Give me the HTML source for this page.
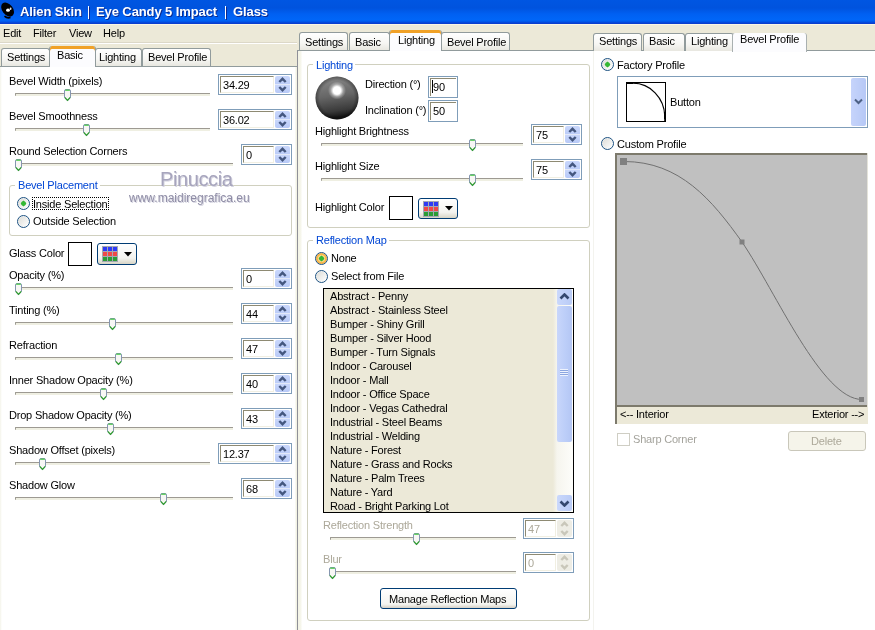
<!DOCTYPE html><html><head><meta charset="utf-8"><style>
*{margin:0;padding:0;box-sizing:border-box}
html,body{width:875px;height:630px;overflow:hidden;background:#ECE9D8}
body{position:relative;font-family:"Liberation Sans",sans-serif}
.ab{position:absolute;display:block}
.t{position:absolute;font-size:11px;line-height:13px;white-space:nowrap;letter-spacing:-0.2px;color:#000}
.tabu{position:absolute;border:1px solid #919B9C;border-bottom:none;border-radius:3px 3px 0 0;background:linear-gradient(#FFFFFF,#F6F6F3 60%,#E8E7E0)}
.tabs{position:absolute;border:1px solid #919B9C;border-top:none;border-bottom:none;border-radius:3px 3px 0 0;background:#FCFCFE;box-shadow:inset 0 3px 0 #F0A127;}
.trk{position:absolute;height:3px;border-top:1px solid #9D9A92;border-left:1px solid #9D9A92;background:#EFEFE2;border-radius:1px 0 0 1px}
.spin{position:absolute;border:1px solid #7F9DB9;background:#fff}
.spin .ed{position:absolute;left:1px;top:1px;height:17px;border-top:1px solid #8E8A73;border-left:1px solid #8E8A73;border-right:1px solid #F1EFE2;border-bottom:1px solid #F1EFE2}
.spin .sb{position:absolute;right:1px;top:1px;width:15px;height:17px;background:linear-gradient(#C9D7FB,#BCCDF8 47%,#E3E9F9 50%,#C9D7FB 53%,#B7C9F7);border-radius:2px}
.spin .sb.dis{background:#EEEDE5}
.cbtn{position:absolute;border:1px solid #003C74;border-radius:3px;background:linear-gradient(#FFFFFF,#F3F3EF 70%,#D8D5C6)}
.grp{position:absolute;border:1px solid #D0D0BF;border-radius:3px}
.glab{color:#0046D5;background:#fff}
.pbtn{position:absolute;border:1px solid #003C74;border-radius:3px;background:linear-gradient(#FFFFFF,#F4F4F0 80%,#D6D0C5)}
</style></head><body><div id="root" style="position:absolute;left:0;top:0;width:875px;height:630px;overflow:hidden;will-change:transform">
<div style="position:absolute;left:0px;top:0px;width:875px;height:24px;background:linear-gradient(#0056E2 0,#0053DE 8px,#0060F2 14px,#0066F8 20px,#0052E6 22px,#0A3ECF 23px,#0A3ECF 24px)"></div>
<svg class="ab" style="left:0;top:0" width="17" height="21" viewBox="0 0 17 21"><ellipse cx="7.6" cy="9.6" rx="5.3" ry="7.9" transform="rotate(-38 7.6 9.6)" fill="#000"/><path d="M4.5 16.2 Q7 18.6 10.5 17.6" stroke="#000" stroke-width="1.6" fill="none"/><ellipse cx="8" cy="10.2" rx="1.9" ry="1.6" fill="#fff"/><ellipse cx="10.6" cy="8.8" rx="0.9" ry="1.2" fill="#ddd"/></svg>
<div class="t" style="left:20px;top:4px;font-size:13px;line-height:15px;font-weight:bold;color:#fff;letter-spacing:-0.1px;text-shadow:1px 1px 0 #0A2A90">Alien Skin</div>
<div class="t" style="left:96px;top:4px;font-size:13px;line-height:15px;font-weight:bold;color:#fff;letter-spacing:-0.1px;text-shadow:1px 1px 0 #0A2A90">Eye Candy 5 Impact</div>
<div class="t" style="left:233px;top:4px;font-size:13px;line-height:15px;font-weight:bold;color:#fff;letter-spacing:-0.1px;text-shadow:1px 1px 0 #0A2A90">Glass</div>
<div style="position:absolute;left:88px;top:6px;width:1px;height:13px;background:#fff;box-shadow:1px 1px 0 #0A2A90"></div>
<div style="position:absolute;left:225px;top:6px;width:1px;height:13px;background:#fff;box-shadow:1px 1px 0 #0A2A90"></div>
<div style="position:absolute;left:0px;top:24px;width:875px;height:1px;background:#FBF6E4"></div>
<div class="t" style="left:3px;top:27px;">Edit</div>
<div class="t" style="left:33px;top:27px;">Filter</div>
<div class="t" style="left:69px;top:27px;">View</div>
<div class="t" style="left:103px;top:27px;">Help</div>
<div style="position:absolute;left:0px;top:42px;width:297px;height:1px;background:#DCD8C8"></div>
<div style="position:absolute;left:0px;top:43px;width:297px;height:1px;background:#FFFFFF"></div>
<div style="position:absolute;left:0px;top:66px;width:298px;height:564px;background:linear-gradient(90deg,#F4F4EA 0,#FFFFFF 2px,#FFFFFF 295px,#F2F2E4 296px);border-top:1px solid #919B9C;border-right:1px solid #8F9098"></div>
<div class="tabu" style="left:1px;top:48px;width:49px;height:18px"></div>
<div class="t" style="left:7px;top:51px;">Settings</div>
<div class="tabu" style="left:95px;top:48px;width:47px;height:18px"></div>
<div class="t" style="left:99px;top:51px;">Lighting</div>
<div class="tabu" style="left:142px;top:48px;width:69px;height:18px"></div>
<div class="t" style="left:148px;top:51px;">Bevel Profile</div>
<div class="tabs" style="left:49px;top:46px;width:47px;height:21px;"></div>
<div class="t" style="left:57px;top:49px;">Basic</div>
<div class="t" style="left:9px;top:75px;">Bevel Width (pixels)</div>
<div class="trk" style="left:15px;top:93px;width:195px"></div>
<svg class="ab" style="left:64px;top:89px" width="7" height="13" viewBox="0 0 7 13"><path d="M0.5 2 Q0.5 0.5 2 0.5 H5 Q6.5 0.5 6.5 2 V8.5 L3.5 11.8 L0.5 8.5 Z" fill="#F7F7F4" stroke="#8596B0" stroke-width="1"/><path d="M1.2 1.2 H5.8" stroke="#45C945" stroke-width="1.2"/><path d="M0.8 8.4 L3.5 11.4 L6.2 8.4" fill="none" stroke="#2A9A2A" stroke-width="1.2"/></svg>
<div class="spin" style="left:218px;top:74px;width:74px;height:21px"><div class="ed" style="width:54px"></div><div class="sb"><svg width="15" height="17" viewBox="0 0 15 17"><path d="M4.3 6 L7.5 2.8 L10.7 6" fill="none" stroke="#44577F" stroke-width="2.4"/><path d="M4.3 11 L7.5 14.2 L10.7 11" fill="none" stroke="#44577F" stroke-width="2.4"/></svg></div><div class="t" style="left:4px;top:4px;color:#000">34.29</div></div>
<div class="t" style="left:9px;top:110px;">Bevel Smoothness</div>
<div class="trk" style="left:15px;top:128px;width:195px"></div>
<svg class="ab" style="left:83px;top:124px" width="7" height="13" viewBox="0 0 7 13"><path d="M0.5 2 Q0.5 0.5 2 0.5 H5 Q6.5 0.5 6.5 2 V8.5 L3.5 11.8 L0.5 8.5 Z" fill="#F7F7F4" stroke="#8596B0" stroke-width="1"/><path d="M1.2 1.2 H5.8" stroke="#45C945" stroke-width="1.2"/><path d="M0.8 8.4 L3.5 11.4 L6.2 8.4" fill="none" stroke="#2A9A2A" stroke-width="1.2"/></svg>
<div class="spin" style="left:218px;top:109px;width:74px;height:21px"><div class="ed" style="width:54px"></div><div class="sb"><svg width="15" height="17" viewBox="0 0 15 17"><path d="M4.3 6 L7.5 2.8 L10.7 6" fill="none" stroke="#44577F" stroke-width="2.4"/><path d="M4.3 11 L7.5 14.2 L10.7 11" fill="none" stroke="#44577F" stroke-width="2.4"/></svg></div><div class="t" style="left:4px;top:4px;color:#000">36.02</div></div>
<div class="t" style="left:9px;top:145px;">Round Selection Corners</div>
<div class="trk" style="left:15px;top:163px;width:218px"></div>
<svg class="ab" style="left:15px;top:159px" width="7" height="13" viewBox="0 0 7 13"><path d="M0.5 2 Q0.5 0.5 2 0.5 H5 Q6.5 0.5 6.5 2 V8.5 L3.5 11.8 L0.5 8.5 Z" fill="#F7F7F4" stroke="#8596B0" stroke-width="1"/><path d="M1.2 1.2 H5.8" stroke="#45C945" stroke-width="1.2"/><path d="M0.8 8.4 L3.5 11.4 L6.2 8.4" fill="none" stroke="#2A9A2A" stroke-width="1.2"/></svg>
<div class="spin" style="left:241px;top:144px;width:51px;height:21px"><div class="ed" style="width:31px"></div><div class="sb"><svg width="15" height="17" viewBox="0 0 15 17"><path d="M4.3 6 L7.5 2.8 L10.7 6" fill="none" stroke="#44577F" stroke-width="2.4"/><path d="M4.3 11 L7.5 14.2 L10.7 11" fill="none" stroke="#44577F" stroke-width="2.4"/></svg></div><div class="t" style="left:4px;top:4px;color:#000">0</div></div>
<div class="t" style="left:9px;top:269px;">Opacity (%)</div>
<div class="trk" style="left:15px;top:287px;width:218px"></div>
<svg class="ab" style="left:15px;top:283px" width="7" height="13" viewBox="0 0 7 13"><path d="M0.5 2 Q0.5 0.5 2 0.5 H5 Q6.5 0.5 6.5 2 V8.5 L3.5 11.8 L0.5 8.5 Z" fill="#F7F7F4" stroke="#8596B0" stroke-width="1"/><path d="M1.2 1.2 H5.8" stroke="#45C945" stroke-width="1.2"/><path d="M0.8 8.4 L3.5 11.4 L6.2 8.4" fill="none" stroke="#2A9A2A" stroke-width="1.2"/></svg>
<div class="spin" style="left:241px;top:268px;width:51px;height:21px"><div class="ed" style="width:31px"></div><div class="sb"><svg width="15" height="17" viewBox="0 0 15 17"><path d="M4.3 6 L7.5 2.8 L10.7 6" fill="none" stroke="#44577F" stroke-width="2.4"/><path d="M4.3 11 L7.5 14.2 L10.7 11" fill="none" stroke="#44577F" stroke-width="2.4"/></svg></div><div class="t" style="left:4px;top:4px;color:#000">0</div></div>
<div class="t" style="left:9px;top:304px;">Tinting (%)</div>
<div class="trk" style="left:15px;top:322px;width:218px"></div>
<svg class="ab" style="left:109px;top:318px" width="7" height="13" viewBox="0 0 7 13"><path d="M0.5 2 Q0.5 0.5 2 0.5 H5 Q6.5 0.5 6.5 2 V8.5 L3.5 11.8 L0.5 8.5 Z" fill="#F7F7F4" stroke="#8596B0" stroke-width="1"/><path d="M1.2 1.2 H5.8" stroke="#45C945" stroke-width="1.2"/><path d="M0.8 8.4 L3.5 11.4 L6.2 8.4" fill="none" stroke="#2A9A2A" stroke-width="1.2"/></svg>
<div class="spin" style="left:241px;top:303px;width:51px;height:21px"><div class="ed" style="width:31px"></div><div class="sb"><svg width="15" height="17" viewBox="0 0 15 17"><path d="M4.3 6 L7.5 2.8 L10.7 6" fill="none" stroke="#44577F" stroke-width="2.4"/><path d="M4.3 11 L7.5 14.2 L10.7 11" fill="none" stroke="#44577F" stroke-width="2.4"/></svg></div><div class="t" style="left:4px;top:4px;color:#000">44</div></div>
<div class="t" style="left:9px;top:339px;">Refraction</div>
<div class="trk" style="left:15px;top:357px;width:218px"></div>
<svg class="ab" style="left:115px;top:353px" width="7" height="13" viewBox="0 0 7 13"><path d="M0.5 2 Q0.5 0.5 2 0.5 H5 Q6.5 0.5 6.5 2 V8.5 L3.5 11.8 L0.5 8.5 Z" fill="#F7F7F4" stroke="#8596B0" stroke-width="1"/><path d="M1.2 1.2 H5.8" stroke="#45C945" stroke-width="1.2"/><path d="M0.8 8.4 L3.5 11.4 L6.2 8.4" fill="none" stroke="#2A9A2A" stroke-width="1.2"/></svg>
<div class="spin" style="left:241px;top:338px;width:51px;height:21px"><div class="ed" style="width:31px"></div><div class="sb"><svg width="15" height="17" viewBox="0 0 15 17"><path d="M4.3 6 L7.5 2.8 L10.7 6" fill="none" stroke="#44577F" stroke-width="2.4"/><path d="M4.3 11 L7.5 14.2 L10.7 11" fill="none" stroke="#44577F" stroke-width="2.4"/></svg></div><div class="t" style="left:4px;top:4px;color:#000">47</div></div>
<div class="t" style="left:9px;top:374px;">Inner Shadow Opacity (%)</div>
<div class="trk" style="left:15px;top:392px;width:218px"></div>
<svg class="ab" style="left:100px;top:388px" width="7" height="13" viewBox="0 0 7 13"><path d="M0.5 2 Q0.5 0.5 2 0.5 H5 Q6.5 0.5 6.5 2 V8.5 L3.5 11.8 L0.5 8.5 Z" fill="#F7F7F4" stroke="#8596B0" stroke-width="1"/><path d="M1.2 1.2 H5.8" stroke="#45C945" stroke-width="1.2"/><path d="M0.8 8.4 L3.5 11.4 L6.2 8.4" fill="none" stroke="#2A9A2A" stroke-width="1.2"/></svg>
<div class="spin" style="left:241px;top:373px;width:51px;height:21px"><div class="ed" style="width:31px"></div><div class="sb"><svg width="15" height="17" viewBox="0 0 15 17"><path d="M4.3 6 L7.5 2.8 L10.7 6" fill="none" stroke="#44577F" stroke-width="2.4"/><path d="M4.3 11 L7.5 14.2 L10.7 11" fill="none" stroke="#44577F" stroke-width="2.4"/></svg></div><div class="t" style="left:4px;top:4px;color:#000">40</div></div>
<div class="t" style="left:9px;top:409px;">Drop Shadow Opacity (%)</div>
<div class="trk" style="left:15px;top:427px;width:218px"></div>
<svg class="ab" style="left:107px;top:423px" width="7" height="13" viewBox="0 0 7 13"><path d="M0.5 2 Q0.5 0.5 2 0.5 H5 Q6.5 0.5 6.5 2 V8.5 L3.5 11.8 L0.5 8.5 Z" fill="#F7F7F4" stroke="#8596B0" stroke-width="1"/><path d="M1.2 1.2 H5.8" stroke="#45C945" stroke-width="1.2"/><path d="M0.8 8.4 L3.5 11.4 L6.2 8.4" fill="none" stroke="#2A9A2A" stroke-width="1.2"/></svg>
<div class="spin" style="left:241px;top:408px;width:51px;height:21px"><div class="ed" style="width:31px"></div><div class="sb"><svg width="15" height="17" viewBox="0 0 15 17"><path d="M4.3 6 L7.5 2.8 L10.7 6" fill="none" stroke="#44577F" stroke-width="2.4"/><path d="M4.3 11 L7.5 14.2 L10.7 11" fill="none" stroke="#44577F" stroke-width="2.4"/></svg></div><div class="t" style="left:4px;top:4px;color:#000">43</div></div>
<div class="t" style="left:9px;top:444px;">Shadow Offset (pixels)</div>
<div class="trk" style="left:15px;top:462px;width:195px"></div>
<svg class="ab" style="left:39px;top:458px" width="7" height="13" viewBox="0 0 7 13"><path d="M0.5 2 Q0.5 0.5 2 0.5 H5 Q6.5 0.5 6.5 2 V8.5 L3.5 11.8 L0.5 8.5 Z" fill="#F7F7F4" stroke="#8596B0" stroke-width="1"/><path d="M1.2 1.2 H5.8" stroke="#45C945" stroke-width="1.2"/><path d="M0.8 8.4 L3.5 11.4 L6.2 8.4" fill="none" stroke="#2A9A2A" stroke-width="1.2"/></svg>
<div class="spin" style="left:218px;top:443px;width:74px;height:21px"><div class="ed" style="width:54px"></div><div class="sb"><svg width="15" height="17" viewBox="0 0 15 17"><path d="M4.3 6 L7.5 2.8 L10.7 6" fill="none" stroke="#44577F" stroke-width="2.4"/><path d="M4.3 11 L7.5 14.2 L10.7 11" fill="none" stroke="#44577F" stroke-width="2.4"/></svg></div><div class="t" style="left:4px;top:4px;color:#000">12.37</div></div>
<div class="t" style="left:9px;top:479px;">Shadow Glow</div>
<div class="trk" style="left:15px;top:497px;width:218px"></div>
<svg class="ab" style="left:160px;top:493px" width="7" height="13" viewBox="0 0 7 13"><path d="M0.5 2 Q0.5 0.5 2 0.5 H5 Q6.5 0.5 6.5 2 V8.5 L3.5 11.8 L0.5 8.5 Z" fill="#F7F7F4" stroke="#8596B0" stroke-width="1"/><path d="M1.2 1.2 H5.8" stroke="#45C945" stroke-width="1.2"/><path d="M0.8 8.4 L3.5 11.4 L6.2 8.4" fill="none" stroke="#2A9A2A" stroke-width="1.2"/></svg>
<div class="spin" style="left:241px;top:478px;width:51px;height:21px"><div class="ed" style="width:31px"></div><div class="sb"><svg width="15" height="17" viewBox="0 0 15 17"><path d="M4.3 6 L7.5 2.8 L10.7 6" fill="none" stroke="#44577F" stroke-width="2.4"/><path d="M4.3 11 L7.5 14.2 L10.7 11" fill="none" stroke="#44577F" stroke-width="2.4"/></svg></div><div class="t" style="left:4px;top:4px;color:#000">68</div></div>
<div class="grp" style="left:9px;top:185px;width:283px;height:51px"></div>
<div class="t glab" style="left:15px;top:179px;padding:0 2px 0 3px">Bevel Placement</div>
<svg class="ab" style="left:17.0px;top:197.0px" width="13" height="13" viewBox="0 0 13 13"><defs><linearGradient id="rg" x1="0" y1="0" x2="1" y2="1"><stop offset="0" stop-color="#DCDCD7"/><stop offset="1" stop-color="#FFFFFF"/></linearGradient></defs><circle cx="6.5" cy="6.5" r="5.2" fill="url(#rg)"/><circle cx="6.5" cy="6.5" r="6" fill="none" stroke="#1C5180" stroke-width="1"/><path d="M6.5 3.6 L9.4 6.5 L6.5 9.4 L3.6 6.5 Z" fill="#2DAF2D"/><circle cx="6.5" cy="6.5" r="2.3" fill="#34B834"/></svg>
<svg class="ab" style="left:17.0px;top:215.0px" width="13" height="13" viewBox="0 0 13 13"><defs><linearGradient id="rg" x1="0" y1="0" x2="1" y2="1"><stop offset="0" stop-color="#DCDCD7"/><stop offset="1" stop-color="#FFFFFF"/></linearGradient></defs><circle cx="6.5" cy="6.5" r="5.2" fill="url(#rg)"/><circle cx="6.5" cy="6.5" r="6" fill="none" stroke="#1C5180" stroke-width="1"/></svg>
<div class="t" style="left:33px;top:198px;width:77px;overflow:hidden">Inside Selection</div>
<div style="position:absolute;left:32px;top:197px;width:77px;height:13px;border:1px dotted #000"></div>
<div class="t" style="left:33px;top:215px;">Outside Selection</div>
<div class="t" style="left:160px;top:168px;font-size:20px;line-height:22px;color:#A7A5BD;letter-spacing:-0.4px;text-shadow:1px 1px 0 #D5D4E0">Pinuccia</div>
<div class="t" style="left:129px;top:191px;font-size:12px;line-height:14px;color:#8F8DA6;letter-spacing:0;text-shadow:1px 1px 0 #D5D4E0">www.maidiregrafica.eu</div>
<div class="t" style="left:9px;top:247px;">Glass Color</div>
<div style="position:absolute;left:68px;top:242px;width:24px;height:24px;border:1px solid #000;background:#fff"></div>
<div class="cbtn" style="left:97px;top:243px;width:40px;height:22px"><svg class="ab" style="left:4px;top:2px" width="16" height="16" viewBox="0 0 16 16"><rect x="0" y="0" width="16" height="16" fill="#A4A8B2"/><rect x="1" y="1" width="4" height="4" fill="#2F3BF5"/><rect x="6" y="1" width="4" height="4" fill="#2F3BF5"/><rect x="11" y="1" width="4" height="4" fill="#2F3BF5"/><rect x="1" y="6" width="4" height="4" fill="#F04848"/><rect x="6" y="6" width="4" height="4" fill="#F04848"/><rect x="11" y="6" width="4" height="4" fill="#F04848"/><rect x="1" y="11" width="4" height="4" fill="#2A9C36"/><rect x="6" y="11" width="4" height="4" fill="#2A9C36"/><rect x="11" y="11" width="4" height="4" fill="#2A9C36"/></svg><svg class="ab" style="left:26px;top:8px" width="8" height="5" viewBox="0 0 8 5"><path d="M0 0 H8 L4 4.5 Z" fill="#000"/></svg></div>
<div style="position:absolute;left:297px;top:50px;width:297px;height:580px;background:linear-gradient(90deg,#F3F3E5 0,#F6F6EC 3px,#FFFFFF 4px);border-top:1px solid #919B9C;border-left:1px solid #8F9098;border-right:1px solid #F3F3EE"></div>
<div class="tabu" style="left:299px;top:32px;width:49px;height:18px"></div>
<div class="t" style="left:305px;top:36px;">Settings</div>
<div class="tabu" style="left:349px;top:32px;width:41px;height:18px"></div>
<div class="t" style="left:355px;top:36px;">Basic</div>
<div class="tabu" style="left:441px;top:32px;width:69px;height:18px"></div>
<div class="t" style="left:447px;top:36px;">Bevel Profile</div>
<div class="tabs" style="left:389px;top:30px;width:53px;height:21px;"></div>
<div class="t" style="left:398px;top:34px;">Lighting</div>
<div class="grp" style="left:307px;top:64px;width:283px;height:164px"></div>
<div class="t glab" style="left:313px;top:59px;padding:0 2px 0 3px">Lighting</div>
<svg class="ab" style="left:315px;top:76px" width="44" height="44" viewBox="0 0 44 44"><defs><linearGradient id="sphl" x1="0" y1="0" x2="0.15" y2="1"><stop offset="0" stop-color="#8C8C8C"/><stop offset="0.5" stop-color="#666666"/><stop offset="0.85" stop-color="#3A3A3A"/><stop offset="1" stop-color="#151515"/></linearGradient><radialGradient id="sphh" cx="22" cy="14.5" r="9" gradientUnits="userSpaceOnUse"><stop offset="0" stop-color="#fff"/><stop offset="0.42" stop-color="#fff"/><stop offset="0.7" stop-color="#fff" stop-opacity="0.35"/><stop offset="1" stop-color="#fff" stop-opacity="0"/></radialGradient><radialGradient id="sphe" cx="22" cy="22" r="21.5" gradientUnits="userSpaceOnUse"><stop offset="0.8" stop-color="#000" stop-opacity="0"/><stop offset="1" stop-color="#000" stop-opacity="0.35"/></radialGradient></defs><circle cx="22" cy="22" r="21.5" fill="url(#sphl)"/><circle cx="22" cy="22" r="21.5" fill="url(#sphe)"/><circle cx="22" cy="22" r="21.5" fill="url(#sphh)"/></svg>
<div class="t" style="left:365px;top:78px;">Direction (°)</div>
<div style="position:absolute;left:428px;top:76px;width:30px;height:22px;border:1px solid #7F9DB9;background:#fff"><div style="position:absolute;left:1px;top:1px;width:26px;height:18px;border-top:1px solid #8E8A73;border-left:1px solid #8E8A73"></div></div>
<div class="t" style="left:433px;top:81px;">90</div>
<div style="position:absolute;left:432px;top:80px;width:1px;height:13px;background:#000"></div>
<div class="t" style="left:365px;top:104px;">Inclination (°)</div>
<div style="position:absolute;left:428px;top:100px;width:30px;height:22px;border:1px solid #7F9DB9;background:#fff"><div style="position:absolute;left:1px;top:1px;width:26px;height:18px;border-top:1px solid #8E8A73;border-left:1px solid #8E8A73"></div></div>
<div class="t" style="left:433px;top:105px;">50</div>
<div class="t" style="left:315px;top:125px;">Highlight Brightness</div>
<div class="trk" style="left:321px;top:143px;width:202px"></div>
<svg class="ab" style="left:469px;top:139px" width="7" height="13" viewBox="0 0 7 13"><path d="M0.5 2 Q0.5 0.5 2 0.5 H5 Q6.5 0.5 6.5 2 V8.5 L3.5 11.8 L0.5 8.5 Z" fill="#F7F7F4" stroke="#8596B0" stroke-width="1"/><path d="M1.2 1.2 H5.8" stroke="#45C945" stroke-width="1.2"/><path d="M0.8 8.4 L3.5 11.4 L6.2 8.4" fill="none" stroke="#2A9A2A" stroke-width="1.2"/></svg>
<div class="spin" style="left:531px;top:124px;width:51px;height:21px"><div class="ed" style="width:31px"></div><div class="sb"><svg width="15" height="17" viewBox="0 0 15 17"><path d="M4.3 6 L7.5 2.8 L10.7 6" fill="none" stroke="#44577F" stroke-width="2.4"/><path d="M4.3 11 L7.5 14.2 L10.7 11" fill="none" stroke="#44577F" stroke-width="2.4"/></svg></div><div class="t" style="left:4px;top:4px;color:#000">75</div></div>
<div class="t" style="left:315px;top:160px;">Highlight Size</div>
<div class="trk" style="left:321px;top:178px;width:202px"></div>
<svg class="ab" style="left:469px;top:174px" width="7" height="13" viewBox="0 0 7 13"><path d="M0.5 2 Q0.5 0.5 2 0.5 H5 Q6.5 0.5 6.5 2 V8.5 L3.5 11.8 L0.5 8.5 Z" fill="#F7F7F4" stroke="#8596B0" stroke-width="1"/><path d="M1.2 1.2 H5.8" stroke="#45C945" stroke-width="1.2"/><path d="M0.8 8.4 L3.5 11.4 L6.2 8.4" fill="none" stroke="#2A9A2A" stroke-width="1.2"/></svg>
<div class="spin" style="left:531px;top:159px;width:51px;height:21px"><div class="ed" style="width:31px"></div><div class="sb"><svg width="15" height="17" viewBox="0 0 15 17"><path d="M4.3 6 L7.5 2.8 L10.7 6" fill="none" stroke="#44577F" stroke-width="2.4"/><path d="M4.3 11 L7.5 14.2 L10.7 11" fill="none" stroke="#44577F" stroke-width="2.4"/></svg></div><div class="t" style="left:4px;top:4px;color:#000">75</div></div>
<div class="t" style="left:315px;top:201px;">Highlight Color</div>
<div style="position:absolute;left:389px;top:196px;width:24px;height:24px;border:1px solid #000;background:#fff"></div>
<div class="cbtn" style="left:418px;top:198px;width:40px;height:21px"><svg class="ab" style="left:4px;top:2px" width="16" height="16" viewBox="0 0 16 16"><rect x="0" y="0" width="16" height="16" fill="#A4A8B2"/><rect x="1" y="1" width="4" height="4" fill="#2F3BF5"/><rect x="6" y="1" width="4" height="4" fill="#2F3BF5"/><rect x="11" y="1" width="4" height="4" fill="#2F3BF5"/><rect x="1" y="6" width="4" height="4" fill="#F04848"/><rect x="6" y="6" width="4" height="4" fill="#F04848"/><rect x="11" y="6" width="4" height="4" fill="#F04848"/><rect x="1" y="11" width="4" height="4" fill="#2A9C36"/><rect x="6" y="11" width="4" height="4" fill="#2A9C36"/><rect x="11" y="11" width="4" height="4" fill="#2A9C36"/></svg><svg class="ab" style="left:26px;top:7px" width="8" height="5" viewBox="0 0 8 5"><path d="M0 0 H8 L4 4.5 Z" fill="#000"/></svg></div>
<div class="grp" style="left:307px;top:240px;width:283px;height:381px"></div>
<div class="t glab" style="left:313px;top:234px;padding:0 2px 0 3px">Reflection Map</div>
<svg class="ab" style="left:315.0px;top:252.0px" width="13" height="13" viewBox="0 0 13 13"><defs><linearGradient id="rg" x1="0" y1="0" x2="1" y2="1"><stop offset="0" stop-color="#DCDCD7"/><stop offset="1" stop-color="#FFFFFF"/></linearGradient></defs><circle cx="6.5" cy="6.5" r="5.5" fill="#F8B648"/><circle cx="6.5" cy="6.5" r="3.6" fill="#FCD98C"/><circle cx="6.5" cy="6.5" r="6" fill="none" stroke="#1C5180" stroke-width="1"/><path d="M6.5 3.6 L9.4 6.5 L6.5 9.4 L3.6 6.5 Z" fill="#2DAF2D"/><circle cx="6.5" cy="6.5" r="2.3" fill="#34B834"/></svg>
<div class="t" style="left:331px;top:252px;">None</div>
<svg class="ab" style="left:315.0px;top:270.0px" width="13" height="13" viewBox="0 0 13 13"><defs><linearGradient id="rg" x1="0" y1="0" x2="1" y2="1"><stop offset="0" stop-color="#DCDCD7"/><stop offset="1" stop-color="#FFFFFF"/></linearGradient></defs><circle cx="6.5" cy="6.5" r="5.2" fill="url(#rg)"/><circle cx="6.5" cy="6.5" r="6" fill="none" stroke="#1C5180" stroke-width="1"/></svg>
<div class="t" style="left:331px;top:270px;">Select from File</div>
<div style="position:absolute;left:323px;top:288px;width:251px;height:225px;border:1px solid #000;background:#ECE9D8;overflow:hidden">
<div class="t" style="left:6px;top:1px">Abstract - Penny</div>
<div class="t" style="left:6px;top:15px">Abstract - Stainless Steel</div>
<div class="t" style="left:6px;top:29px">Bumper - Shiny Grill</div>
<div class="t" style="left:6px;top:43px">Bumper - Silver Hood</div>
<div class="t" style="left:6px;top:57px">Bumper - Turn Signals</div>
<div class="t" style="left:6px;top:71px">Indoor - Carousel</div>
<div class="t" style="left:6px;top:85px">Indoor - Mall</div>
<div class="t" style="left:6px;top:99px">Indoor - Office Space</div>
<div class="t" style="left:6px;top:113px">Indoor - Vegas Cathedral</div>
<div class="t" style="left:6px;top:127px">Industrial - Steel Beams</div>
<div class="t" style="left:6px;top:141px">Industrial - Welding</div>
<div class="t" style="left:6px;top:155px">Nature - Forest</div>
<div class="t" style="left:6px;top:169px">Nature - Grass and Rocks</div>
<div class="t" style="left:6px;top:183px">Nature - Palm Trees</div>
<div class="t" style="left:6px;top:197px">Nature - Yard</div>
<div class="t" style="left:6px;top:211px">Road - Bright Parking Lot</div>
<div style="position:absolute;left:229px;top:0px;width:20px;height:223px;background:linear-gradient(90deg,#ECE9D8,#F6F5EE 4px,#FDFDFA)"></div>
<div style="position:absolute;left:233px;top:0px;width:15px;height:16px;border-radius:2px;background:linear-gradient(90deg,#CAD8FC,#B9CBF6)"><svg class="ab" style="left:2px;top:4px" width="11" height="7" viewBox="0 0 11 7"><path d="M1.5 5.5 L5.5 1.5 L9.5 5.5" fill="none" stroke="#34486F" stroke-width="2.6"/></svg></div>
<div style="position:absolute;left:233px;top:17px;width:15px;height:136px;border-radius:2px;background:linear-gradient(90deg,#C8D6FB,#BBCDF8 60%,#B4C6F4)"><div style="position:absolute;left:3px;top:63px;width:8px;height:7px;background:repeating-linear-gradient(#EEF3FE 0,#EEF3FE 1px,#8CA6E0 1px,#8CA6E0 2px)"></div></div>
<div style="position:absolute;left:233px;top:206px;width:15px;height:16px;border-radius:2px;background:linear-gradient(90deg,#CAD8FC,#B9CBF6)"><svg class="ab" style="left:2px;top:5px" width="11" height="7" viewBox="0 0 11 7"><path d="M1.5 1.5 L5.5 5.5 L9.5 1.5" fill="none" stroke="#34486F" stroke-width="2.6"/></svg></div>
</div>
<div class="t" style="left:323px;top:519px;color:#ACA899">Reflection Strength</div>
<div class="trk" style="left:330px;top:537px;width:186px"></div>
<svg class="ab" style="left:413px;top:533px" width="7" height="13" viewBox="0 0 7 13"><path d="M0.5 2 Q0.5 0.5 2 0.5 H5 Q6.5 0.5 6.5 2 V8.5 L3.5 11.8 L0.5 8.5 Z" fill="#F7F7F4" stroke="#8596B0" stroke-width="1"/><path d="M1.2 1.2 H5.8" stroke="#45C945" stroke-width="1.2"/><path d="M0.8 8.4 L3.5 11.4 L6.2 8.4" fill="none" stroke="#2A9A2A" stroke-width="1.2"/></svg>
<div class="spin" style="left:523px;top:518px;width:51px;height:21px"><div class="ed" style="width:31px"></div><div class="sb dis"><svg width="15" height="17" viewBox="0 0 15 17"><path d="M4.3 6 L7.5 2.8 L10.7 6" fill="none" stroke="#C9C7BA" stroke-width="2.4"/><path d="M4.3 11 L7.5 14.2 L10.7 11" fill="none" stroke="#C9C7BA" stroke-width="2.4"/></svg></div><div class="t" style="left:4px;top:4px;color:#ACA899">47</div></div>
<div class="t" style="left:323px;top:553px;color:#ACA899">Blur</div>
<div class="trk" style="left:330px;top:571px;width:186px"></div>
<svg class="ab" style="left:329px;top:567px" width="7" height="13" viewBox="0 0 7 13"><path d="M0.5 2 Q0.5 0.5 2 0.5 H5 Q6.5 0.5 6.5 2 V8.5 L3.5 11.8 L0.5 8.5 Z" fill="#F7F7F4" stroke="#8596B0" stroke-width="1"/><path d="M1.2 1.2 H5.8" stroke="#45C945" stroke-width="1.2"/><path d="M0.8 8.4 L3.5 11.4 L6.2 8.4" fill="none" stroke="#2A9A2A" stroke-width="1.2"/></svg>
<div class="spin" style="left:523px;top:552px;width:51px;height:21px"><div class="ed" style="width:31px"></div><div class="sb dis"><svg width="15" height="17" viewBox="0 0 15 17"><path d="M4.3 6 L7.5 2.8 L10.7 6" fill="none" stroke="#C9C7BA" stroke-width="2.4"/><path d="M4.3 11 L7.5 14.2 L10.7 11" fill="none" stroke="#C9C7BA" stroke-width="2.4"/></svg></div><div class="t" style="left:4px;top:4px;color:#ACA899">0</div></div>
<div class="pbtn" style="left:380px;top:588px;width:137px;height:21px"></div>
<div class="t" style="left:389px;top:593px;">Manage Reflection Maps</div>
<div style="position:absolute;left:594px;top:50px;width:281px;height:580px;background:#FFFFFF;border-top:1px solid #919B9C"></div>
<div class="tabu" style="left:593px;top:33px;width:49px;height:18px"></div>
<div class="t" style="left:599px;top:35px;">Settings</div>
<div class="tabu" style="left:643px;top:33px;width:42px;height:18px"></div>
<div class="t" style="left:649px;top:35px;">Basic</div>
<div class="tabu" style="left:685px;top:33px;width:49px;height:18px"></div>
<div class="t" style="left:691px;top:35px;">Lighting</div>
<div class="tabs" style="left:732px;top:33px;width:75px;height:19px;box-shadow:none;border-color:#A9B0B0"></div>
<div class="t" style="left:740px;top:33px;">Bevel Profile</div>
<svg class="ab" style="left:601.0px;top:58.0px" width="13" height="13" viewBox="0 0 13 13"><defs><linearGradient id="rg" x1="0" y1="0" x2="1" y2="1"><stop offset="0" stop-color="#DCDCD7"/><stop offset="1" stop-color="#FFFFFF"/></linearGradient></defs><circle cx="6.5" cy="6.5" r="5.2" fill="url(#rg)"/><circle cx="6.5" cy="6.5" r="6" fill="none" stroke="#1C5180" stroke-width="1"/><path d="M6.5 3.6 L9.4 6.5 L6.5 9.4 L3.6 6.5 Z" fill="#2DAF2D"/><circle cx="6.5" cy="6.5" r="2.3" fill="#34B834"/></svg>
<div class="t" style="left:617px;top:59px;">Factory Profile</div>
<div style="position:absolute;left:617px;top:76px;width:251px;height:52px;border:1px solid #7F9DB9;background:#fff"></div>
<svg class="ab" style="left:626px;top:82px" width="40" height="40" viewBox="0 0 40 40"><rect x="0.5" y="0.5" width="39" height="39" fill="#fff" stroke="#000" stroke-width="1"/><path d="M0.5 1.2 H7 A32 34 0 0 1 38.8 34 V39" fill="none" stroke="#000" stroke-width="1.2"/><rect x="0" y="0" width="7" height="2" fill="#000"/><rect x="38" y="30" width="2" height="7" fill="#000"/></svg>
<div class="t" style="left:670px;top:96px;">Button</div>
<div style="position:absolute;left:851px;top:78px;width:15px;height:48px;border-radius:2px;background:linear-gradient(90deg,#C6D4FB,#B6C8F6)"><svg class="ab" style="left:3px;top:20px" width="9" height="7" viewBox="0 0 9 7"><path d="M1 1.5 L4.5 5 L8 1.5" fill="none" stroke="#4D6185" stroke-width="2"/></svg></div>
<svg class="ab" style="left:601.0px;top:137.0px" width="13" height="13" viewBox="0 0 13 13"><defs><linearGradient id="rg" x1="0" y1="0" x2="1" y2="1"><stop offset="0" stop-color="#DCDCD7"/><stop offset="1" stop-color="#FFFFFF"/></linearGradient></defs><circle cx="6.5" cy="6.5" r="5.2" fill="url(#rg)"/><circle cx="6.5" cy="6.5" r="6" fill="none" stroke="#1C5180" stroke-width="1"/></svg>
<div class="t" style="left:617px;top:138px;">Custom Profile</div>
<div style="position:absolute;left:615px;top:153px;width:253px;height:271px;background:#ECE9D8;border-left:2px solid #7D7A6C"></div>
<div style="position:absolute;left:617px;top:153px;width:250px;height:254px;background:#C0C0C0;border-top:2px solid #7D7A6C;border-bottom:2px solid #7D7A6C"></div>
<div style="position:absolute;left:867px;top:153px;width:1px;height:254px;background:#E4E3DA"></div>
<svg class="ab" style="left:0;top:0" width="875" height="630" viewBox="0 0 875 630"><path d="M624 161.5 C680 161.5 712 200 742 242 C776 292 822 399.5 862 399.5" fill="none" stroke="#707070" stroke-width="1"/><rect x="620" y="158" width="7" height="7" fill="#808080"/><rect x="739.5" y="239.5" width="5" height="5" fill="#808080"/><rect x="859" y="397" width="5" height="5" fill="#808080"/></svg>
<div class="t" style="left:620px;top:408px;">&lt;-- Interior</div>
<div class="t" style="left:812px;top:408px;">Exterior --&gt;</div>
<div style="position:absolute;left:617px;top:433px;width:13px;height:13px;border:1px solid #CFCEC4;background:#fff"></div>
<div class="t" style="left:633px;top:433px;color:#A4A39C">Sharp Corner</div>
<div style="position:absolute;left:788px;top:431px;width:78px;height:20px;border:1px solid #C9C7BA;border-radius:3px;background:#F5F4EA"></div>
<div class="t" style="left:811px;top:435px;color:#ACA899">Delete</div>
</div></body></html>
